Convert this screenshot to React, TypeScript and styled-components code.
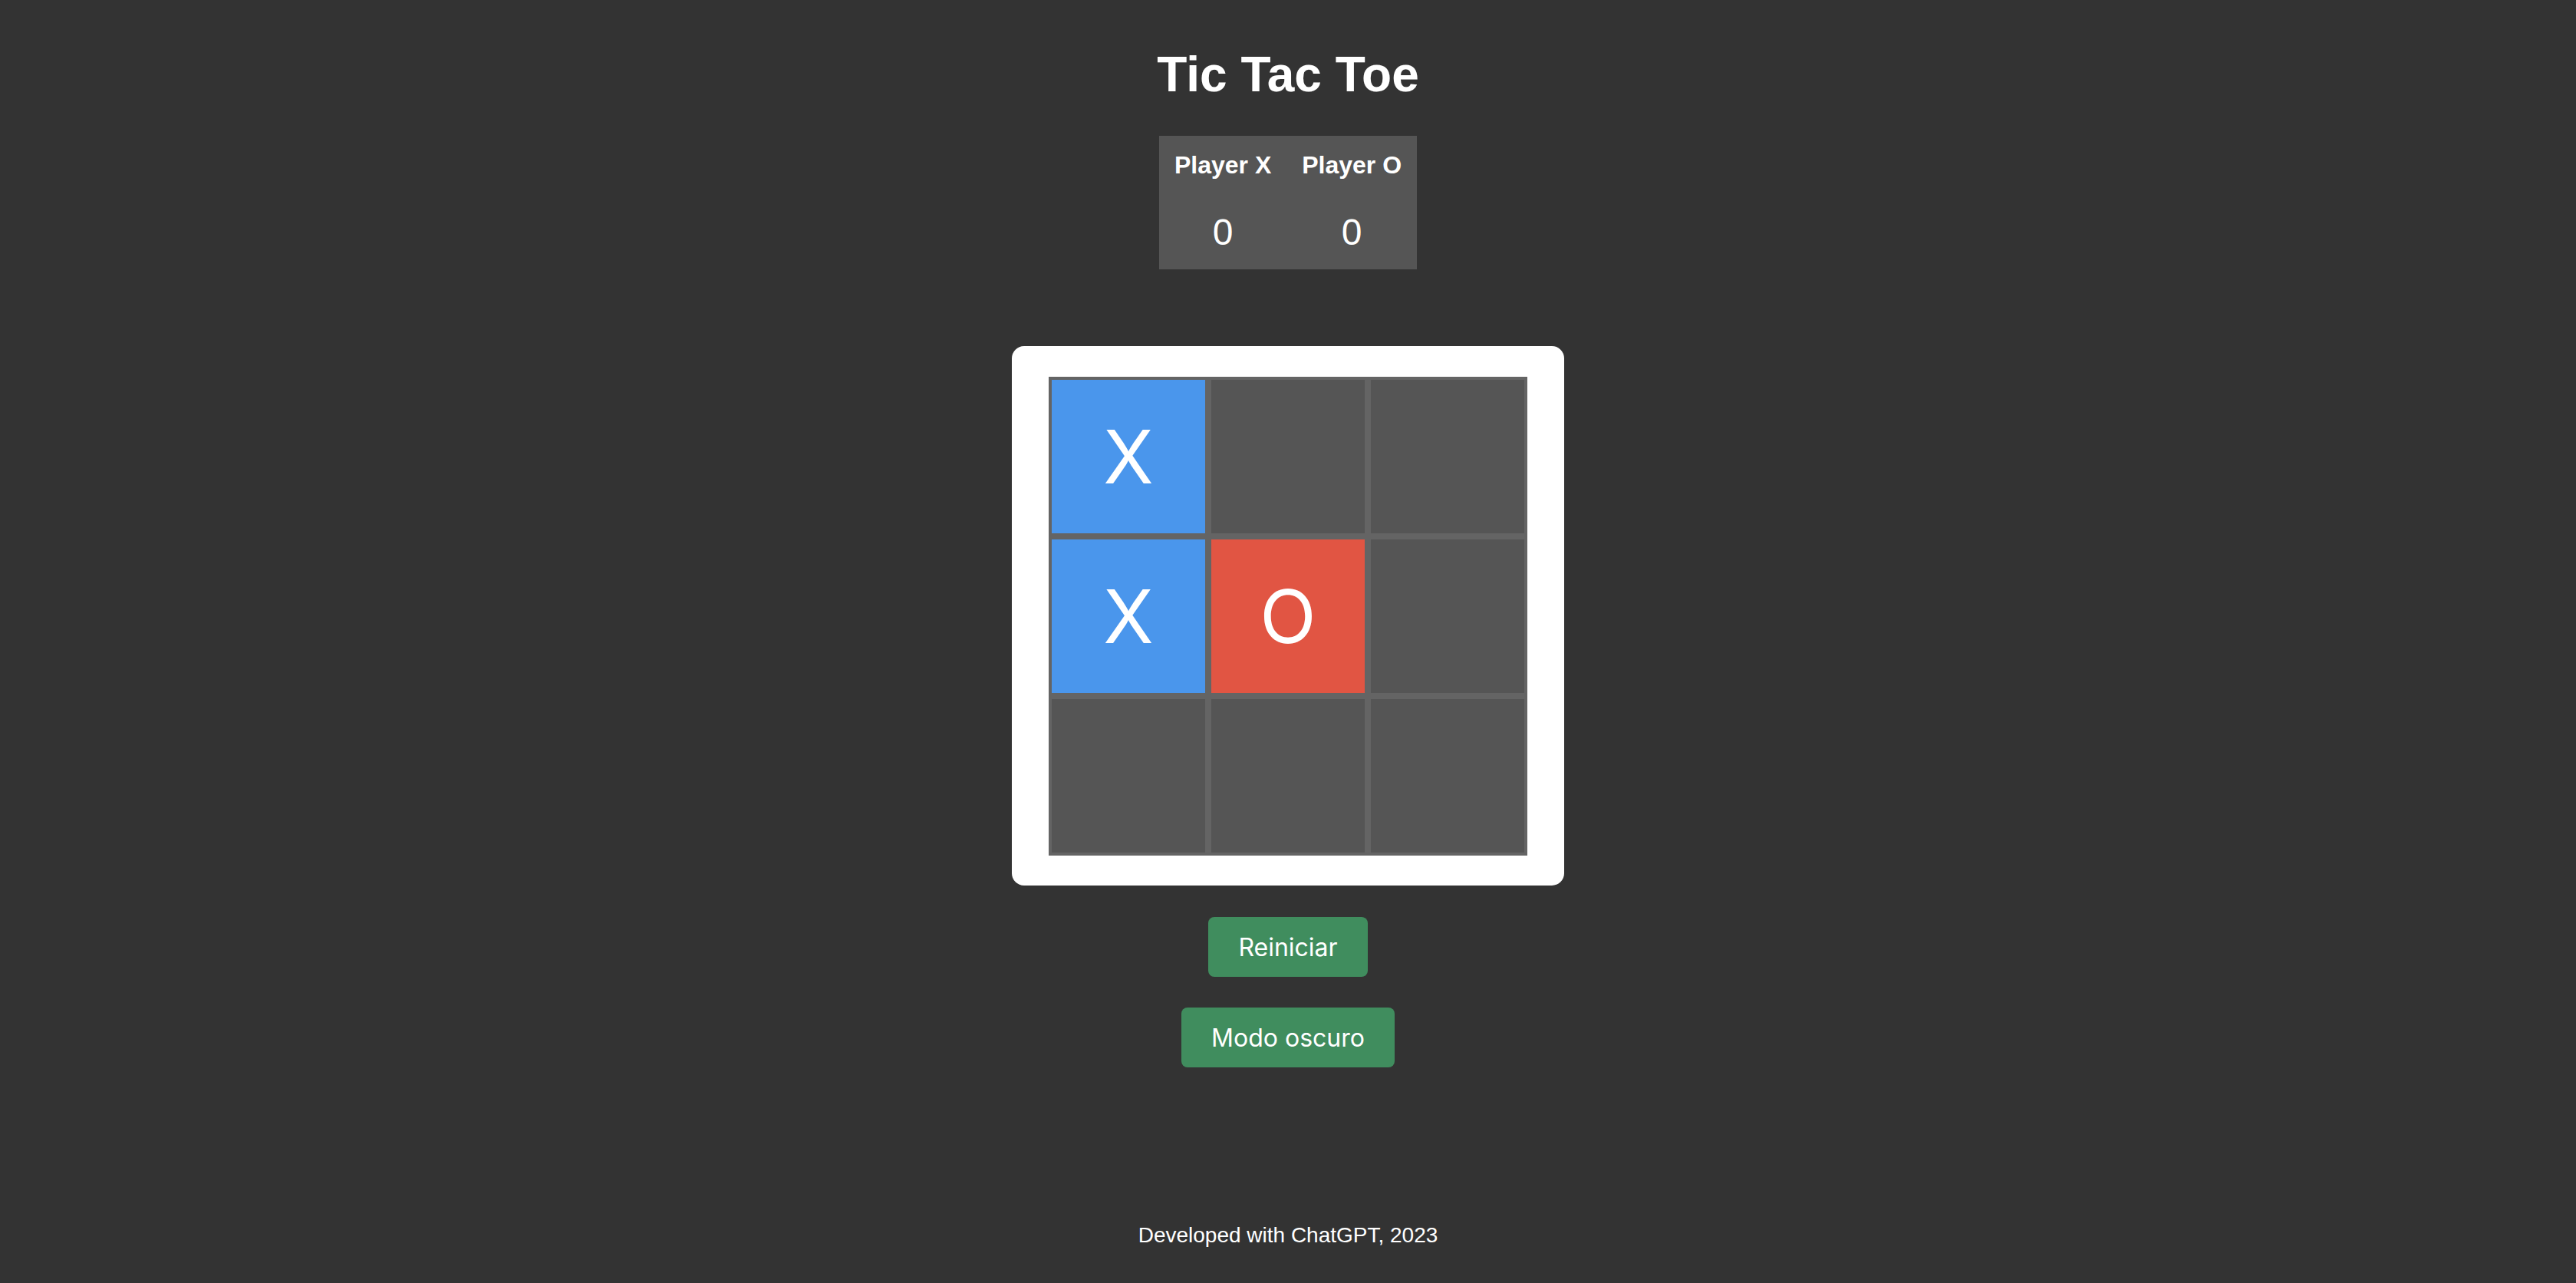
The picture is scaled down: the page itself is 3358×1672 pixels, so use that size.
import React from "react";
import styled, { createGlobalStyle } from "styled-components";

const GlobalStyle = createGlobalStyle`
  html, body {
    margin: 0;
    padding: 0;
    background: #333333;
  }
  body {
    font-family: "Liberation Sans", Arial, Helvetica, sans-serif;
    color: #ffffff;
  }
`;

const Page = styled.div`
  min-height: 100vh;
  box-sizing: border-box;
  display: flex;
  flex-direction: column;
  align-items: center;
  padding-top: 60px;
`;

const Title = styled.h1`
  margin: 0;
  font-size: 64px;
  line-height: 74px;
  font-weight: 700;
  color: #ffffff;
`;

const Scoreboard = styled.table`
  margin-top: 43px;
  border-collapse: collapse;
  background: #555555;
`;

const ScoreHead = styled.th`
  padding: 20px;
  font-size: 32px;
  line-height: 37px;
  font-weight: 700;
  text-align: center;
`;

const ScoreValue = styled.td`
  padding: 20px;
  font-size: 48px;
  line-height: 57px;
  font-weight: 400;
  text-align: center;
`;

const BoardCard = styled.div`
  margin-top: 100px;
  background: #ffffff;
  border-radius: 16px;
  padding: 40px 48px 39px;
`;

const Grid = styled.div`
  display: grid;
  grid-template-columns: repeat(3, 200px);
  grid-auto-rows: 200px;
  gap: 8px;
  padding: 4px;
  background: #646464;
`;

type Mark = "X" | "O" | "";

const Cell = styled.div<{ $mark: Mark }>`
  display: flex;
  align-items: center;
  justify-content: center;
  font-family: Inter, "Liberation Sans", sans-serif;
  font-size: 96px;
  font-weight: 400;
  color: #ffffff;
  background: ${({ $mark }) =>
    $mark === "X" ? "#4a96ec" : $mark === "O" ? "#e15543" : "#555555"};
`;

const ActionButton = styled.button<{ $gap: number }>`
  margin-top: ${({ $gap }) => $gap}px;
  height: 78px;
  padding: 0 39px;
  border: none;
  border-radius: 8px;
  background: #408d5e;
  color: #ffffff;
  font-family: Inter, "Liberation Sans", sans-serif;
  font-size: 32px;
  font-weight: 400;
  cursor: pointer;
`;

const Footer = styled.footer`
  margin-top: auto;
  padding-bottom: 46px;
  font-size: 28px;
  line-height: 32px;
  color: #ffffff;
`;

const board: Mark[] = ["X", "", "", "X", "O", "", "", "", ""];

export default function App() {
  return (
    <>
      <GlobalStyle />
      <Page>
        <Title>Tic Tac Toe</Title>
        <Scoreboard>
          <thead>
            <tr>
              <ScoreHead>Player X</ScoreHead>
              <ScoreHead>Player O</ScoreHead>
            </tr>
          </thead>
          <tbody>
            <tr>
              <ScoreValue>0</ScoreValue>
              <ScoreValue>0</ScoreValue>
            </tr>
          </tbody>
        </Scoreboard>
        <BoardCard>
          <Grid>
            {board.map((m, i) => (
              <Cell key={i} $mark={m}>
                {m}
              </Cell>
            ))}
          </Grid>
        </BoardCard>
        <ActionButton $gap={41}>Reiniciar</ActionButton>
        <ActionButton $gap={40}>Modo oscuro</ActionButton>
        <Footer>Developed with ChatGPT, 2023</Footer>
      </Page>
    </>
  );
}
